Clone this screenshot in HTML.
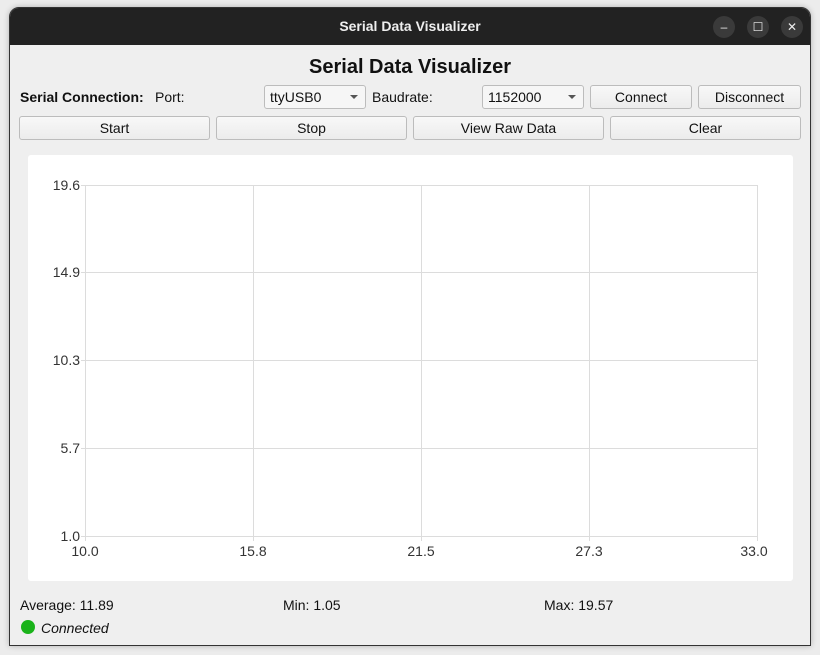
<!DOCTYPE html>
<html><head><style>
*{box-sizing:border-box;margin:0;padding:0}
body{width:820px;height:655px;background:#ececec;font-family:"Liberation Sans",sans-serif;font-size:14px;color:#111;position:relative;overflow:hidden}
.win{position:absolute;left:9px;top:7px;width:802px;height:639px;background:#efefef;border:1px solid #333;border-radius:10px 10px 0 0;overflow:hidden;box-shadow:0 0 6px rgba(0,0,0,.25)}
.tb{position:absolute;left:0;top:0;width:100%;height:37px;background:#222;color:#eee;font-weight:bold;font-size:14px;text-align:center;line-height:37px}
.cb{position:absolute;top:8px;width:22px;height:22px;border-radius:50%;background:#3a3a3a;color:#eee;font-size:12px;line-height:22px;text-align:center;font-weight:normal}
.a{position:absolute;white-space:nowrap}
.btn{position:absolute;height:24px;border:1px solid #bcbcbc;border-radius:3px;background:linear-gradient(#f8f8f8,#ececec);text-align:center;line-height:22px;font-size:14px}
.combo{position:absolute;height:24px;border:1px solid #bcbcbc;border-radius:3px;background:#f6f6f6;line-height:22px;padding-left:5px}
.combo:after{content:"";position:absolute;right:7px;top:9px;border:4px solid transparent;border-top:4px solid #555}
.plot{position:absolute;left:18px;top:147px;width:765px;height:426px;background:#fff;border-radius:3px}
</style></head><body>
<div class="win">
<div class="tb">Serial Data Visualizer
<div class="cb" style="left:703px">–</div>
<div class="cb" style="left:737px">☐</div>
<div class="cb" style="left:771px">✕</div>
</div>
<div class="a" style="left:0;width:800px;top:48px;text-align:center;font-weight:bold;font-size:20px">Serial Data Visualizer</div>
<div class="a" style="left:10px;top:81px;font-weight:bold">Serial Connection:</div>
<div class="a" style="left:145px;top:81px">Port:</div>
<div class="combo" style="left:254px;top:77px;width:102px">ttyUSB0</div>
<div class="a" style="left:362px;top:81px">Baudrate:</div>
<div class="combo" style="left:472px;top:77px;width:102px">1152000</div>
<div class="btn" style="left:580px;top:77px;width:102px">Connect</div>
<div class="btn" style="left:688px;top:77px;width:103px">Disconnect</div>
<div class="btn" style="left:9px;top:108px;width:191px">Start</div>
<div class="btn" style="left:206px;top:108px;width:191px">Stop</div>
<div class="btn" style="left:403px;top:108px;width:191px">View Raw Data</div>
<div class="btn" style="left:600px;top:108px;width:191px">Clear</div>
<div class="plot">
<svg width="765" height="426" style="position:absolute;left:0;top:0">
<g stroke="#dcdcdc" stroke-width="1">
<line x1="57.5" y1="30" x2="57.5" y2="386"/><line x1="225.5" y1="30" x2="225.5" y2="386"/><line x1="393.5" y1="30" x2="393.5" y2="386"/><line x1="561.5" y1="30" x2="561.5" y2="386"/><line x1="729.5" y1="30" x2="729.5" y2="386"/>
<line x1="53" y1="30.5" x2="730" y2="30.5"/><line x1="53" y1="117.5" x2="730" y2="117.5"/><line x1="53" y1="205.5" x2="730" y2="205.5"/><line x1="53" y1="293.5" x2="730" y2="293.5"/><line x1="53" y1="381.5" x2="730" y2="381.5"/>
</g>
<g font-family="Liberation Sans" font-size="14" fill="#333" text-anchor="end">
<text x="52" y="35">19.6</text><text x="52" y="122">14.9</text><text x="52" y="210">10.3</text><text x="52" y="298">5.7</text><text x="52" y="386">1.0</text>
</g>
<g font-family="Liberation Sans" font-size="14" fill="#333" text-anchor="middle">
<text x="57" y="401">10.0</text><text x="225" y="401">15.8</text><text x="393" y="401">21.5</text><text x="561" y="401">27.3</text><text x="726" y="401">33.0</text>
</g>
</svg>
</div>
<div class="a" style="left:10px;top:589px">Average: 11.89</div>
<div class="a" style="left:273px;top:589px">Min: 1.05</div>
<div class="a" style="left:534px;top:589px">Max: 19.57</div>
<div class="a" style="left:11px;top:612px;width:14px;height:14px;border-radius:50%;background:#1ab31a"></div>
<div class="a" style="left:31px;top:612px;font-style:italic">Connected</div>
</div>
</body></html>
